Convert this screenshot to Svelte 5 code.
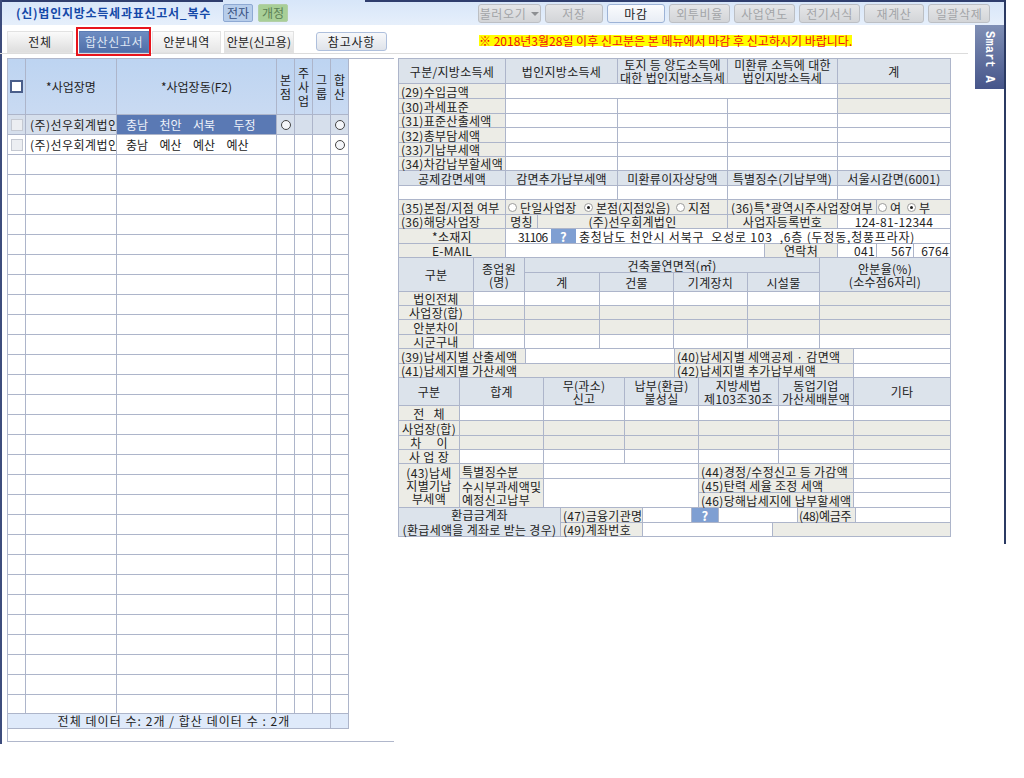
<script>
  const H = 'h', L = 'l', C = 'c', W = 'w', G = 'g';
  // [x1, y1, x2, y2, kind, text]  — x/y are the grid lines a cell runs between
  const cells = [
    [398,58,505,83,H,'구분/지방소득세'],[505,58,617,83,H,'법인지방소득세'],[617,58,727,83,H,'토지 등 양도소득에\n대한 법인지방소득세'],[727,58,837,83,H,'미환류 소득에 대한\n법인지방소득세'],[837,58,950,83,H,'계'],
    [398,83,505,98,L,'(29)수입금액'],[505,83,837,98,W],[837,83,950,98,G],
    [398,98,505,113,L,'(30)과세표준'],[505,98,617,113,W],[617,98,727,113,W],[727,98,837,113,W],[837,98,950,113,G],
    [398,113,505,127,L,'(31)표준산출세액'],[505,113,617,127,W],[617,113,727,127,W],[727,113,837,127,W],[837,113,950,127,W],
    [398,127,505,142,L,'(32)총부담세액'],[505,127,617,142,W],[617,127,727,142,W],[727,127,837,142,W],[837,127,950,142,W],
    [398,142,505,156,L,'(33)기납부세액'],[505,142,617,156,W],[617,142,727,156,W],[727,142,837,156,W],[837,142,950,156,W],
    [398,156,505,170,L,'(34)차감납부할세액'],[505,156,617,170,W],[617,156,727,170,W],[727,156,837,170,W],[837,156,950,170,W],
    [398,170,505,185,H,'공제감면세액'],[505,170,617,185,H,'감면추가납부세액'],[617,170,727,185,H,'미환류이자상당액'],[727,170,837,185,H,'특별징수(기납부액)'],[837,170,950,185,H,'서울시감면(6001)'],
    [398,185,505,199,W],[505,185,617,199,W],[617,185,727,199,W],[727,185,837,199,W],[837,185,950,199,W],
    [398,199,505,214,L,'(35)본점/지점 여부'],[505,199,727,214,'r1'],[727,199,876,214,C,'(36)특*광역시주사업장여부'],[876,199,950,214,'r2'],
    [398,214,505,228,L,'(36)해당사업장'],[505,214,537,228,C,'명칭'],[537,214,727,228,C,'(주)선우회계법인'],[727,214,837,228,C,'사업자등록번호'],[837,214,950,228,'wc','124-81-12344'],
    [398,228,505,243,C,'*소재지'],[505,228,950,243,'addr'],
    [398,243,505,257,C,'E-MAIL'],[505,243,764,257,W],[764,243,837,257,C,'연락처'],[837,243,876,257,'wr','041'],[876,243,913,257,'wr','567'],[913,243,950,257,'wr','6764'],
    [398,257,473,291,H,'구분'],[473,257,524,291,H,'종업원\n(명)'],[524,257,819,272,H,'건축물연면적(㎡)'],[819,257,950,291,H,'안분율(%)\n(소수점6자리)'],
    [524,272,599,291,H,'계'],[599,272,673,291,H,'건물'],[673,272,747,291,H,'기계장치'],[747,272,819,291,H,'시설물'],
    [398,291,473,305,C,'법인전체'],[473,291,524,305,W],[524,291,599,305,W],[599,291,673,305,W],[673,291,747,305,W],[747,291,819,305,W],[819,291,950,305,G],
    [398,305,473,319,C,'사업장(합)'],[473,305,524,319,G],[524,305,599,319,G],[599,305,673,319,G],[673,305,747,319,G],[747,305,819,319,G],[819,305,950,319,G],
    [398,319,473,334,C,'안분차이'],[473,319,524,334,G],[524,319,599,334,G],[599,319,673,334,G],[673,319,747,334,G],[747,319,819,334,G],[819,319,950,334,G],
    [398,334,473,348,C,'시군구내'],[473,334,524,348,W],[524,334,599,348,W],[599,334,673,348,W],[673,334,747,348,W],[747,334,819,348,W],[819,334,950,348,W],
    [398,348,525,363,L,'(39)납세지별 산출세액'],[525,348,674,363,W],[674,348,853,363,L,'(40)납세지별 세액공제 · 감면액'],[853,348,950,363,W],
    [398,363,674,377,L,'(41)납세지별 가산세액'],[674,363,853,377,L,'(42)납세지별 추가납부세액'],[853,363,950,377,W],
    [398,377,459,405,H,'구분'],[459,377,543,405,H,'합계'],[543,377,624,405,H,'무(과소)\n신고'],[624,377,698,405,H,'납부(환급)\n불성실'],[698,377,778,405,H,'지방세법\n제103조30조'],[778,377,853,405,H,'동업기업\n가산세배분액'],[853,377,950,405,H,'기타'],
    [398,405,459,420,C,'전   체'],[459,405,543,420,W],[543,405,624,420,W],[624,405,698,420,W],[698,405,778,420,W],[778,405,853,420,W],[853,405,950,420,W],
    [398,420,459,435,C,'사업장(합)'],[459,420,543,435,G],[543,420,624,435,G],[624,420,698,435,G],[698,420,778,435,G],[778,420,853,435,G],[853,420,950,435,G],
    [398,435,459,449,C,'차     이'],[459,435,543,449,G],[543,435,624,449,G],[624,435,698,449,G],[698,435,778,449,G],[778,435,853,449,G],[853,435,950,449,G],
    [398,449,459,463,C,'사 업 장'],[459,449,543,463,W],[543,449,624,463,W],[624,449,698,463,W],[698,449,778,463,W],[778,449,853,463,W],[853,449,950,463,W],
    [398,463,459,507,C,'(43)납세\n지별기납\n부세액'],[459,463,543,478,L,'특별징수분'],[543,463,698,478,W],[698,463,853,478,L,'(44)경정/수정신고 등 가감액'],[853,463,950,478,W],
    [459,478,543,507,L,'수시부과세액및\n예정신고납부'],[543,478,698,507,W],[698,478,853,492,L,'(45)탄력 세율 조정 세액'],[853,478,950,492,W],
    [698,492,853,507,L,'(46)당해납세지에 납부할세액'],[853,492,950,507,W],
    [398,507,560,536,'h loose','환급금계좌\n(환급세액을 계좌로 받는 경우)'],[560,507,642,522,L,'(47)금융기관명'],[642,507,691,522,W],[691,507,718,522,'q'],[718,507,797,522,W],[797,507,855,522,'l tight','(48)예금주'],[855,507,950,522,W],
    [560,522,642,536,L,'(49)계좌번호'],[642,522,772,536,W],[772,522,950,536,G]
  ];
  const xs = [...new Set(cells.flatMap(c => [c[0], c[2]]))].sort((a, b) => a - b);
  const ys = [...new Set(cells.flatMap(c => [c[1], c[3]]))].sort((a, b) => a - b);
  const track = a => a.slice(1).map((v, i) => `${v - a[i]}px`).join(' ');
  const area = c => `grid-area:${ys.indexOf(c[1]) + 1}/${xs.indexOf(c[0]) + 1}/${ys.indexOf(c[3]) + 1}/${xs.indexOf(c[2]) + 1}`;
  const formVars = `grid-template-columns:${track(xs)};grid-template-rows:${track(ys)}`;

  const tools = [
    { t: '불러오기', w: 63, caret: true }, { t: '저장', w: 58 }, { t: '마감', w: 58, on: true },
    { t: '외투비율', w: 61 }, { t: '사업연도', w: 61 }, { t: '전기서식', w: 61 }, { t: '재계산', w: 60 }, { t: '일괄삭제', w: 62 }
  ];
  const rows = [
    { name: '(주)선우회계법인', dong: ['충남', '천안', '서북', '두정'], sel: true, hq: true },
    { name: '(주)선우회계법인', dong: ['충남', '예산', '예산', '예산'] }
  ];
  const empties = Array.from({ length: 28 });
</script>

<div class="frame">
  <header class="topbar">
    <strong class="title">(신)법인지방소득세과표신고서_복수</strong>
    <span class="chip blue">전자</span>
    <span class="chip green">개정</span>
    <nav class="tools">
      {#each tools as b}
        <span class="tool" class:on={b.on} style={`width:${b.w}px`}>{b.t}{#if b.caret}<i class="caret"></i>{/if}</span>
      {/each}
    </nav>
  </header>

  <div class="tabs">
    <span class="tab t1">전체</span>
    <span class="tab active">합산신고서</span>
    <span class="tab t3">안분내역</span>
    <span class="tab t4">안분(신고용)</span>
    <span class="note-btn">참고사항</span>
    <span class="notice">※ 2018년3월28일 이후 신고분은 본 메뉴에서 마감 후 신고하시기 바랍니다.</span>
  </div>

  <div class="smart">Smart A</div>

  <main class="content">
    <section class="left">
      <div class="list">
        <div class="lh center"><span class="box big"></span></div>
        <div class="lh center">*사업장명</div>
        <div class="lh center">*사업장동(F2)</div>
        <div class="lh center narrow">본점</div>
        <div class="lh center narrow">주사업</div>
        <div class="lh center narrow">그룹</div>
        <div class="lh center narrow">합산</div>

        {#each rows as r}
          <div class="lc center" class:tint={r.sel}><span class="box"></span></div>
          <div class="lc name" class:tint={r.sel}>{r.name}</div>
          <div class="lc dong" class:picked={r.sel}>
            {#each r.dong as d, i}<span class:far={r.sel && i === 3}>{d}</span>{/each}
          </div>
          <div class="lc center" class:tint={r.sel}>{#if r.hq}<span class="ring"></span>{/if}</div>
          <div class="lc" class:tint={r.sel}></div>
          <div class="lc" class:tint={r.sel}></div>
          <div class="lc center" class:tint={r.sel}><span class="ring"></span></div>
        {/each}

        {#each empties as _}
          <div class="lc"></div><div class="lc"></div><div class="lc"></div><div class="lc"></div><div class="lc"></div><div class="lc"></div><div class="lc"></div>
        {/each}

        <div class="lf sum">전체 데이터 수: 2개 / 합산 데이터 수 : 2개</div>
        <div class="lf"></div>
      </div>
    </section>

    <section class="form" style={formVars}>
      {#each cells as c}
        <div class="cell {c[4]}" style={area(c)}>
          {#if c[4] === 'r1'}
            <label class="opt"><span class="radio"></span>단일사업장</label>
            <label class="opt"><span class="radio on"></span>본점(지점있음)</label>
            <label class="opt"><span class="radio"></span>지점</label>
          {:else if c[4] === 'r2'}
            <label class="opt"><span class="radio"></span>여</label>
            <label class="opt"><span class="radio on"></span>부</label>
          {:else if c[4] === 'addr'}
            <span class="zip">31106</span>
            <span class="qbtn">?</span>
            <span class="addr-text">충청남도 천안시 서북구  오성로 103  ,6층 (두정동,청풍프라자)</span>
          {:else if c[4] === 'q'}
            <span class="qbtn wide">?</span>
          {:else if c[5]}
            {c[5]}
          {/if}
        </div>
      {/each}
    </section>
  </main>
</div>

<style>
  :global(body) { margin: 0; background: #fff; }
  .frame {
    position: relative;
    box-sizing: border-box;
    width: 1024px;
    height: 778px;
    font: 12px/14px "Noto Sans CJK KR", "Noto Sans", sans-serif;
    color: #222;
    overflow: hidden;
  }
  .frame::before {
    content: "";
    position: absolute;
    left: 0; top: 0;
    width: 2px; height: 744px;
    background: #3d4c7c;
  }
  .frame::after {
    content: "";
    position: absolute;
    left: 1004px; top: 0;
    width: 2px; height: 544px;
    background: #2b3a63;
  }
  .topbar {
    display: flex;
    align-items: flex-start;
    box-sizing: border-box;
    height: 25px;
    width: 1004px;
    margin-left: 2px;
    padding: 4px 0 0 14px;
    background:
      linear-gradient(90deg, #2f3e6e 221px, transparent 221px, transparent 363px, #2f3e6e 363px) top / 100% 2px no-repeat,
      linear-gradient(#d7e6f9, #e6effb);
  }
  .title { width: 199px; margin-top: 1px; line-height: 16px; color: #1548a8; letter-spacing: .75px; font-weight: 700; white-space: nowrap; }
  .chip {
    box-sizing: border-box;
    display: flex; align-items: center; justify-content: center;
    height: 18px;
    border-radius: 2px;
  }
  .chip.blue { width: 30px; margin-left: 8px; background: #b7cdea; border: 1px solid #8ea9d3; color: #35507f; }
  .chip.green { width: 30px; margin-left: 5px; background: #a8cf97; border: 1px solid #b3cfa7; color: #5b8055; }
  .tools { display: flex; gap: 4px; margin-left: 190px; }
  .tool {
    box-sizing: border-box;
    display: flex; align-items: center; justify-content: center; gap: 5px;
    height: 19px;
    border: 1px solid #bcbfc4;
    border-radius: 3px;
    background: linear-gradient(#e5e6e8, #d3d5d8);
    color: #a3a5a8;
    letter-spacing: .6px;
  }
  .tool.on { background: linear-gradient(#fafbfd, #e8edf5); border-color: #9db3d6; color: #222; }
  .caret { width: 0; height: 0; border: 4px solid transparent; border-top: 4px solid #8d8f92; border-bottom: 0; }

  .tabs {
    position: relative;
    display: flex;
    align-items: flex-start;
    box-sizing: border-box;
    height: 29px;
    width: 968px;
    padding: 6px 0 0 7px;
    border-bottom: 1px solid #dcdcdc;
  }
  .tab {
    box-sizing: border-box;
    display: flex; align-items: center; justify-content: center;
    height: 22px;
    background: linear-gradient(#fafafa, #dedede);
    border: 1px solid #e2e2e2;
    letter-spacing: .6px;
    white-space: nowrap;
  }
  .t1 { width: 66px; margin-right: 6px; }
  .active {
    position: relative;
    width: 70px; margin-right: 3px;
    background: linear-gradient(#6d8cc2, #4f6ea8);
    border-color: #5c7cb4;
    color: #dfe7f4;
  }
  .active::after {
    content: "";
    position: absolute;
    left: -4px; top: -5px; right: -3px; bottom: -4px;
    border: 2px solid #e8141c;
  }
  .t3 { width: 69px; margin-right: 3px; background: linear-gradient(#fcfcfc, #e6e6e6); }
  .t4 { width: 70px; margin-right: 22px; letter-spacing: .2px; }
  .note-btn {
    box-sizing: border-box;
    display: flex; align-items: center; justify-content: center;
    width: 71px; height: 19px; margin-top: 1px;
    border: 1px solid #aebfdc; border-radius: 3px;
    background: linear-gradient(#f7f8fa, #dfe3ea);
    letter-spacing: .8px;
  }
  .notice {
    margin: 4px 0 0 92px;
    height: 11px;
    width: 373px;
    line-height: 11px;
    background: #ffff00;
    color: #ee1111;
    white-space: nowrap;
    letter-spacing: 0;
    font-size: 12px;
  }
  .smart {
    position: absolute;
    left: 975px; top: 25px;
    box-sizing: border-box;
    width: 29px; height: 64px;
    padding-top: 6px;
    writing-mode: vertical-rl;
    background: linear-gradient(#7f8fb5, #46558a);
    color: #fff;
    font: 700 12px/31px "Liberation Mono", monospace;
    letter-spacing: .2px;
    overflow: hidden;
  }

  .content { display: flex; align-items: flex-start; padding: 4px 0 0 7px; }
  .left {
    box-sizing: border-box;
    width: 387px; height: 684px;
    margin-right: 4px;
    border: solid #b0b7cb;
    border-width: 1px 0 1px 1px;
  }
  .list {
    display: grid;
    width: 342px;
    grid-template-columns: 18px 91px 160px 18px 18px 18px 18px;
    grid-template-rows: 56px repeat(29, 20px) 19px;
    margin-top: -1px;
    margin-left: -1px;
    border-left: 1px solid #b0b7cb;
    border-top: 1px solid #b0b7cb;
  }
  .lh, .lc, .lf { box-sizing: border-box; border: solid #adb5ca; border-width: 0 1px 1px 0; min-width: 0; }
  .lh { background: linear-gradient(#bdd4f1, #c9daf2); }
  .center { display: flex; align-items: center; justify-content: center; text-align: center; }
  .narrow { padding: 0 2px; word-break: break-all; }
  .lc { background: #fff; display: flex; align-items: center; }
  .lc.center { justify-content: center; }
  .tint { background: #d6dfec; }
  .name { padding-left: 4px; white-space: nowrap; overflow: hidden; letter-spacing: .45px; }
  .dong { padding-left: 9px; letter-spacing: -.1px; }
  .dong span { width: 33.5px; flex: none; }
  .dong span.far { margin-left: 7px; }
  .picked { background: #5a79b4; color: #eef2fa; }
  .box { display: block; box-sizing: border-box; width: 12px; height: 12px; background: #eceef2; border: 1px solid #c5c9d2; }
  .box.big { width: 13px; height: 13px; background: #fff; border: 2px solid #4a5e8a; }
  .ring { display: block; box-sizing: border-box; width: 10px; height: 10px; border: 1px solid #444; border-radius: 50%; background: #f4f6fa; }
  .lf { grid-column: 7; background: #dfeafa; }
  .lf.sum { grid-column: 1 / 7; padding-left: 10px; display: flex; align-items: center; justify-content: center; letter-spacing: 1.05px; white-space: pre; }

  .form {
    display: grid;
    border: solid #adb5ca;
    border-width: 1px 0 0 1px;
  }
  .cell {
    box-sizing: border-box;
    display: flex;
    align-items: center;
    min-width: 0;
    white-space: pre;
    border: solid #adb5ca;
    border-width: 0 1px 1px 0;
    background: #fff;
    letter-spacing: .3px;
    line-height: 13px;
  }
  .h { background: #dce3eb; justify-content: center; text-align: center; }
  .loose { line-height: 15px; }
  .l { background: #ecece6; padding-left: 2px; }
  .tight { padding-left: 1px; letter-spacing: -.35px; }
  .c { background: #ecece6; justify-content: center; text-align: center; }
  .g { background: #ecece6; }
  .wc { justify-content: center; }
  .wr { justify-content: flex-end; padding-right: 1px; }
  .r1, .r2 { background: #ecece6; }
  .r1 { padding-left: 2px; }
  .r2 { padding-left: 1px; }
  .opt { display: flex; align-items: center; gap: 3px; flex: none; }
  .r1 .opt:nth-child(1) { width: 76px; }
  .r1 .opt:nth-child(2) { width: 92px; letter-spacing: 0; }
  .r2 .opt:nth-child(1) { width: 29px; }
  .radio { display: block; position: relative; box-sizing: border-box; width: 9px; height: 9px; border: 1px solid #9a9a9a; border-radius: 50%; background: #fff; }
  .radio.on::after { content: ""; position: absolute; left: 2px; top: 2px; width: 3px; height: 3px; border-radius: 50%; background: #222; }
  .addr { padding-left: 12px; }
  .zip { width: 33px; flex: none; letter-spacing: -.8px; }
  .qbtn {
    flex: none;
    box-sizing: border-box;
    display: flex; align-items: center; justify-content: center;
    width: 25px; height: 100%;
    background: #7f9fd2;
    color: #fff;
    font-weight: 700;
    font-size: 13px;
  }
  .addr-text { margin-left: 3px; letter-spacing: .8px; }
  .q { background: #fff; }
  .qbtn.wide { width: 100%; }
</style>
